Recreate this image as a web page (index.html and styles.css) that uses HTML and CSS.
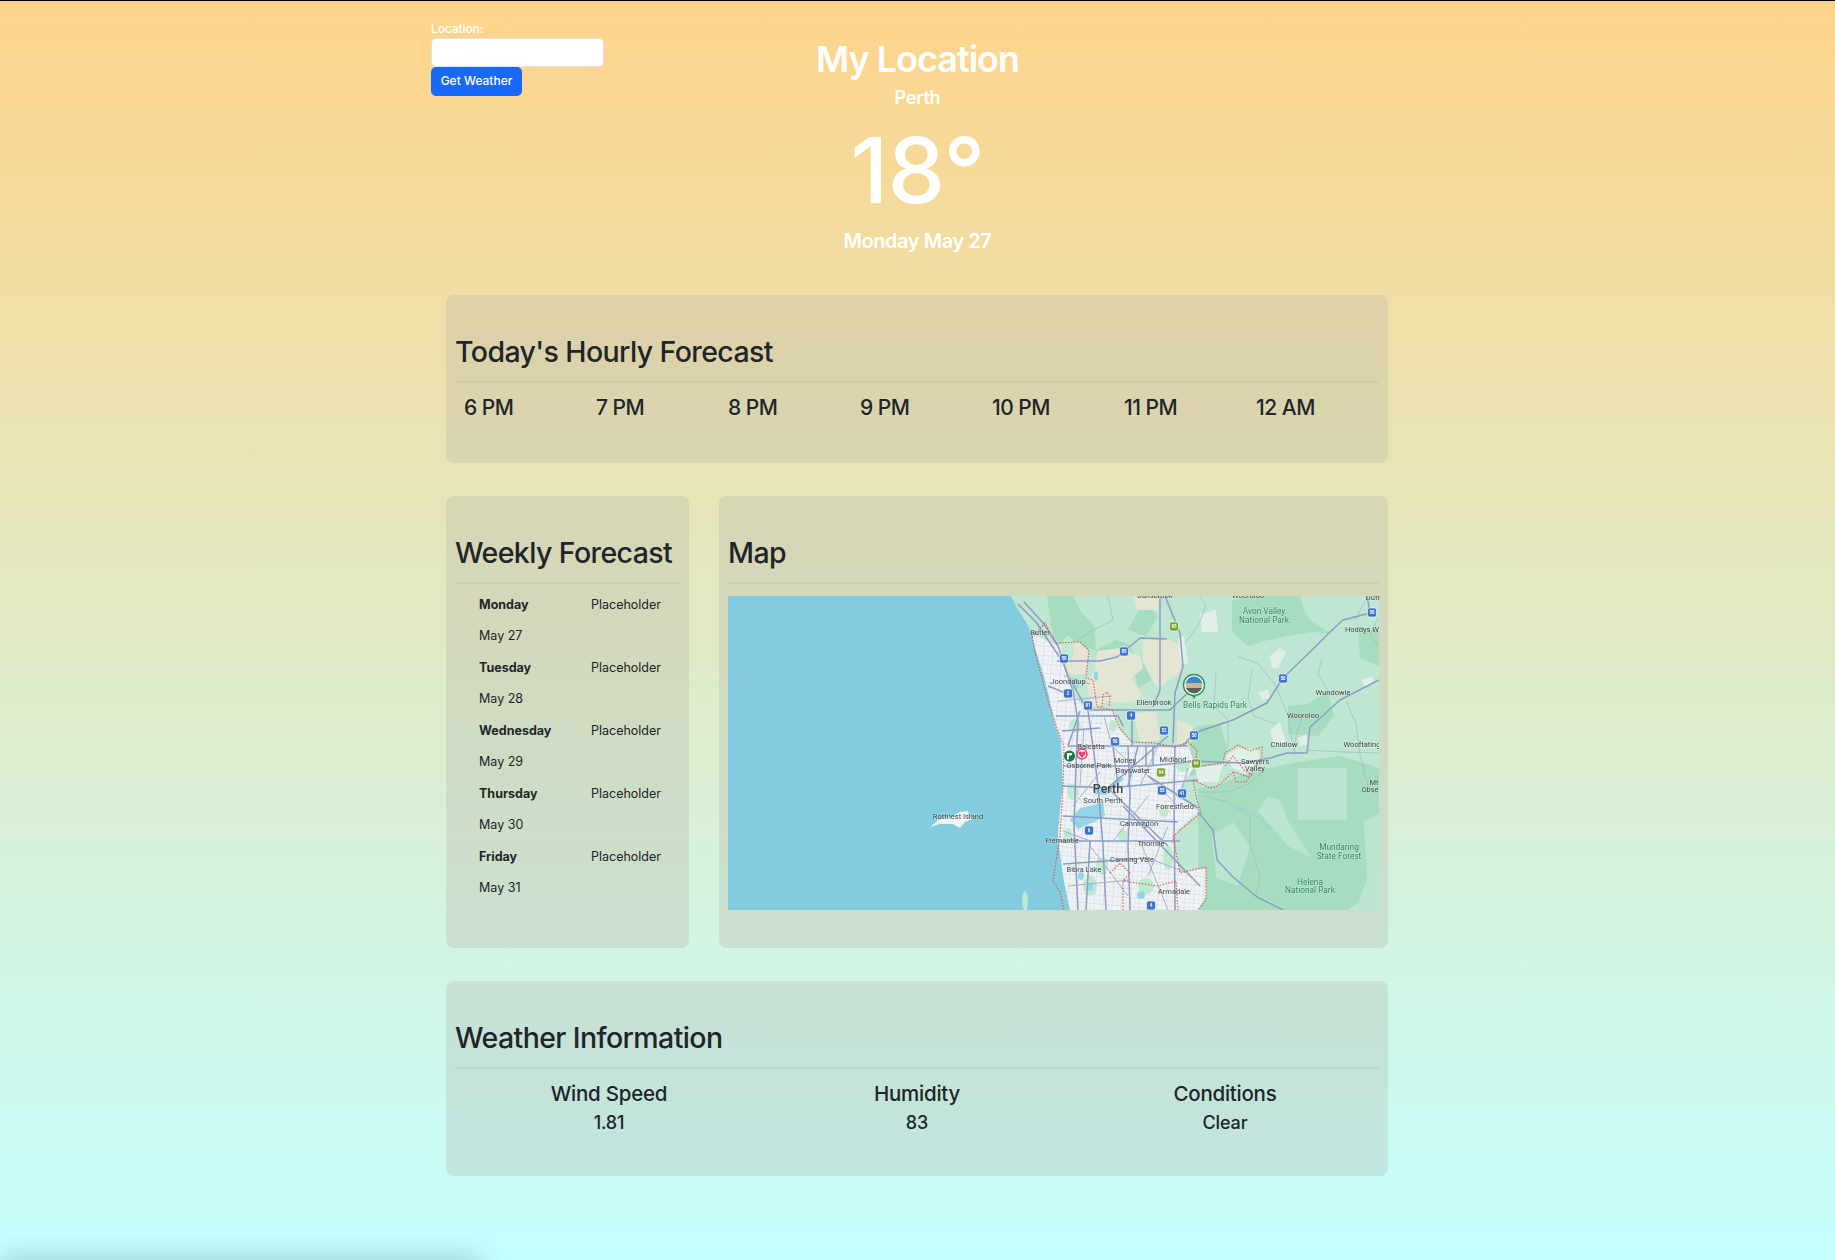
FILE: index.html
```html
<!DOCTYPE html>
<html lang="en">
<head>
<meta charset="utf-8">
<title>Weather</title>
<link rel="stylesheet" href="styles.css">
</head>
<body>
<main class="page">
  <header class="top">
    <form class="search">
      <label class="search-label" for="loc">Location:</label>
      <input class="search-input" id="loc" type="text">
      <button class="search-btn" type="button">Get Weather</button>
    </form>
    <div class="now">
      <h1 class="now-title">My Location</h1>
      <p class="now-city">Perth</p>
      <p class="now-temp">18°</p>
      <p class="now-date">Monday May 27</p>
    </div>
  </header>

  <section class="card card-hourly">
    <h2 class="card-title">Today's Hourly Forecast</h2>
    <div class="hours">
      <span class="hour">6 PM</span>
      <span class="hour">7 PM</span>
      <span class="hour">8 PM</span>
      <span class="hour">9 PM</span>
      <span class="hour">10 PM</span>
      <span class="hour">11 PM</span>
      <span class="hour">12 AM</span>
    </div>
  </section>

  <div class="split">
    <section class="card card-weekly">
      <h2 class="card-title">Weekly Forecast</h2>
      <div class="days">
        <b class="day">Monday</b><span class="cond">Placeholder</span><span class="date">May 27</span>
        <b class="day">Tuesday</b><span class="cond">Placeholder</span><span class="date">May 28</span>
        <b class="day">Wednesday</b><span class="cond">Placeholder</span><span class="date">May 29</span>
        <b class="day">Thursday</b><span class="cond">Placeholder</span><span class="date">May 30</span>
        <b class="day">Friday</b><span class="cond">Placeholder</span><span class="date">May 31</span>
      </div>
    </section>
    <section class="card card-map">
      <h2 class="card-title">Map</h2>
      <svg class="map" viewBox="0 0 651 314" role="img" aria-label="Map of Perth">
        <defs>
          <pattern id="streets" width="9" height="9" patternUnits="userSpaceOnUse" patternTransform="rotate(5)">
            <path class="street" d="M0 0H9M0 4.500H9M0 0V9M4.500 0V9"/>
          </pattern>
          <clipPath id="photo"><circle cx="466" cy="89" r="8.500"/></clipPath>
        </defs>
        <rect class="land" width="651" height="314"/>
        <g class="forest">
          <path d="M319 0L345 0L352 14L366 30L368 54L352 50L340 56L325 40Z"/>
          <path d="M504 4L525 0L572 0L576 14L582 24L604 38L585 36L560 40L540 44L520 50L504 36Z"/>
          <path d="M368 54L388 44L400 48L414 70L404 82L396 96L372 92Z"/>
          <path d="M452 144L470 130L492 128L500 155L488 178L452 180Z"/>
          <path d="M470 192L490 190L510 180L540 172L570 166L612 160L651 172L651 218L636 226L640 300L620 314L470 314Z"/>
          <path d="M560 110L580 108L600 96L606 120L590 140L560 138Z"/>
          <path d="M415 6L430 20L418 40L400 34Z"/>
          <path d="M630 30L651 36L651 70L632 62Z"/>
          <path d="M405 72L418 66L424 84L410 92Z"/>
        </g>
        <g class="forest-light">
          <path d="M570 172H619V224H570Z"/>
          <path d="M540 200L552 204L560 225L584 262L560 250L530 215Z"/>
          <path d="M484 240L505 226L522 250L510 290L488 282Z"/>
          <path d="M636 226L651 218L651 314L628 314L640 280Z"/>
        </g>
        <g class="tan">
          <path d="M369 55L392 52L412 60L415 72L404 82L415 100L405 106L380 106L362 112L358 84L366 78Z"/>
          <path d="M415 44L438 42L455 50L452 76L430 92L424 84L415 66Z"/>
          <path d="M405 117L428 116L432 144L412 146Z"/>
          <path d="M449 124L465 130L462 148L449 148Z"/>
          <path d="M405 1L432 1L430 14L410 14Z"/>
          <path d="M330 48L352 46L360 56L358 78L340 78L332 62Z"/>
          <path d="M420 195L440 192L446 240L425 240Z"/>
          <path d="M410 258L445 250L440 285L412 285Z"/>
        </g>
        <g class="blots">
          <path d="M542 60L552 52L558 56L550 72L544 72Z"/>
          <path d="M530 96L540 94L542 102L534 104Z"/>
          <path d="M542 134L552 126L558 146L546 150Z"/>
          <path d="M634 84L644 80L646 88L636 90Z"/>
          <path d="M472 18L488 14L490 36L474 36Z"/>
          <path d="M450 42L456 40L460 68L452 68Z"/>
          <path d="M570 142L578 138L580 148L572 150Z"/>
          <path d="M497 160L510 152L530 154L532 162L518 178L505 172Z"/>
          <path d="M467 172L495 168L490 186L470 186Z"/>
        </g>
        <path class="sea" d="M0 0L283 0L290 14L298 26L304 38L308 55L316 80L322 105L327 128L333 145L334 165L335 190L332 215L330 240L333 265L336 285L342 314L0 314Z"/>
        <path class="urban" d="M304 38L330 50L340 80L346 100L360 116L384 114L392 135L404 148L447 152L460 148L467 170L456 186L446 200L462 208L470 216L450 234L445 245L452 276L478 272L478 300L470 314L342 314L336 285L333 265L330 240L332 215L335 190L334 165L333 145L327 128L322 105L316 80L308 55Z"/>
        <path class="urban-streets" d="M304 38L330 50L340 80L346 100L360 116L384 114L392 135L404 148L447 152L460 148L467 170L456 186L446 200L462 208L470 216L450 234L445 245L452 276L478 272L478 300L470 314L342 314L336 285L333 265L330 240L332 215L335 190L334 165L333 145L327 128L322 105L316 80L308 55Z"/>
        <g class="parks">
          <ellipse cx="340" cy="52" rx="6" ry="12"/>
          <ellipse cx="352" cy="96" rx="5" ry="8"/>
          <ellipse cx="347" cy="130" rx="6" ry="7"/>
          <ellipse cx="345" cy="196" rx="6" ry="8"/>
          <ellipse cx="374" cy="270" rx="6" ry="9"/>
          <ellipse cx="362" cy="290" rx="7" ry="10"/>
          <ellipse cx="440" cy="262" rx="5" ry="12"/>
          <ellipse cx="395" cy="240" rx="5" ry="6"/>
          <ellipse cx="465" cy="190" rx="6" ry="9"/>
          <ellipse cx="418" cy="290" rx="8" ry="8"/>
          <ellipse cx="455" cy="170" rx="7" ry="6"/>
          <ellipse cx="340" cy="240" rx="4" ry="8"/>
          <ellipse cx="385" cy="130" rx="4" ry="6"/>
          <ellipse cx="436" cy="215" rx="5" ry="6"/>
        </g>
        <g class="water">
          <path d="M342 224L352 212L366 209L375 205L377 220L366 226L350 233Z"/>
          <path d="M365 192L376 194L392 180L396 183L378 199L366 198Z"/>
          <ellipse cx="353" cy="280" rx="3" ry="4"/>
          <ellipse cx="362" cy="291" rx="3" ry="4"/>
          <ellipse cx="413" cy="299" rx="4" ry="4"/>
          <ellipse cx="348" cy="88" rx="3" ry="6"/>
          <ellipse cx="368" cy="80" rx="2" ry="5"/>
        </g>
        <path class="river" d="M510 210L528 220L544 234"/>
        <path class="island" d="M202 231L210 224L222 221L232 216L240 215L241 221L247 222L237 226L232 232L225 228L212 228Z"/>
        <ellipse class="land" cx="297" cy="305" rx="3" ry="10"/>
        <g class="thin">
          <path d="M380 0L385 24L362 36L350 44"/>
          <path d="M472 0L478 10L470 30L456 48"/>
          <path d="M488 75L486 110L500 124L500 150"/>
          <path d="M510 60L530 68L548 90L560 120L566 155"/>
          <path d="M524 74L520 102L526 120L548 128"/>
          <path d="M575 118L568 140L566 160"/>
          <path d="M618 104L628 128L632 158L640 190L651 200"/>
          <path d="M579 154L615 156L651 157"/>
          <path d="M475 200L500 206L522 220L522 248L532 280L528 300"/>
          <path d="M603 100L590 78L594 62"/>
          <path d="M472 196L500 196L520 188L534 176"/>
          <path d="M640 0L632 14L628 24"/>
          <path d="M650 22L642 40L651 50"/>
        </g>
        <g class="road">
          <path d="M432 0L432 41L432 94L425 111"/>
          <path d="M437 0L452 37L455 71L447 97L445 147"/>
          <path d="M329 65L372 65L389 61L412 42L439 43"/>
          <path d="M362 114L442 114L449 107L462 95L468 86"/>
          <path d="M404 117L404 151"/>
          <path d="M455 150L466 137L505 124L539 107L555 82L582 56L602 36L615 24L642 17L639 0"/>
          <path d="M460 165L516 167L542 162L559 157L579 157L582 131L590 124L612 104L651 84"/>
          <path d="M470 216L485 234L489 264L505 281L529 301L555 314"/>
          <path d="M290 8L308 26L320 44L335 66L345 95L350 125L348 170L346 230L350 314"/>
          <path d="M296 6L316 28L330 50L340 80L360 115L365 150L370 190L375 250L378 314"/>
          <path d="M400 150L402 200L400 250L402 314"/>
          <path d="M447 150L446 200L447 314"/>
          <path d="M328 120L390 120L395 130"/>
          <path d="M340 150L460 150"/>
          <path d="M335 170L420 170L470 165"/>
          <path d="M335 190L380 192L470 184"/>
          <path d="M335 220L450 226"/>
          <path d="M330 245L452 245"/>
          <path d="M335 268L420 262"/>
          <path d="M380 192L440 140"/>
          <path d="M380 192L440 250"/>
          <path d="M395 210L472 290"/>
          <path d="M320 90L345 100M334 135L372 132M418 150V170M425 150V170M385 150L390 190M352 115L340 150"/>
          <path d="M362 245L358 314M420 180L470 212M410 150L400 190"/>
        </g>
        <g class="road-mid">
          <path d="M336 80L362 88M330 105L384 100M356 132L352 190M376 120L384 150"/>
          <path d="M345 210L372 176M410 170L450 210M420 200L385 245M440 230L420 280"/>
          <path d="M340 290L402 284M362 250L400 300M412 245L440 314M460 172L452 200"/>
          <path d="M384 150L405 170M430 150L412 190M335 235L362 245M420 262L462 278"/>
        </g>
        <path class="border" d="M304 41L317 27L328 47L352 46L361 54L358 82L365 84L369 111L384 114L391 131L404 146L426 147L447 151L460 146L469 154L467 171L495 167L497 157L510 149L522 155L534 151L534 161L521 181L505 176L490 190L482 192L465 184L469 204L473 217L452 234L445 241L452 277L478 271L478 304L470 314"/>
        <path class="border" d="M374 111L375 99L379 96L382 102L381 111"/>
        <path class="border" d="M304 41L308 60L320 105L330 135L336 150L335 190L332 240L325 285L332 296L336 314"/>
        <path class="border" d="M497 170L505 160L516 174L525 180M505 176L508 186L518 186L521 181"/>
        <path class="border" d="M395 314L395 285L430 290L448 285L450 314M382 277L392 267L402 277L395 285"/>
        <g class="shield">
          <rect x="331.500" y="58" width="9" height="9" rx="2"/><text x="336" y="64.300">50</text>
          <rect x="391.500" y="51" width="9" height="9" rx="2"/><text x="396" y="57.300">85</text>
          <rect x="335.500" y="93" width="9" height="9" rx="2"/><text x="340" y="99.300">2</text>
          <rect x="355.500" y="105" width="9" height="9" rx="2"/><text x="360" y="111.300">81</text>
          <rect x="398.500" y="115" width="9" height="9" rx="2"/><text x="403" y="121.300">4</text>
          <rect x="431.500" y="130" width="9" height="9" rx="2"/><text x="436" y="136.300">52</text>
          <rect x="461.500" y="135" width="9" height="9" rx="2"/><text x="466" y="141.300">50</text>
          <rect x="382.500" y="141" width="9" height="9" rx="2"/><text x="387" y="147.300">50</text>
          <rect x="550.500" y="78" width="9" height="9" rx="2"/><text x="555" y="84.300">50</text>
          <rect x="639.500" y="12" width="9" height="9" rx="2"/><text x="644" y="18.300">50</text>
          <rect x="429.500" y="190" width="9" height="9" rx="2"/><text x="434" y="196.300">55</text>
          <rect x="449.500" y="193" width="9" height="9" rx="2"/><text x="454" y="199.300">41</text>
          <rect x="356.500" y="230" width="9" height="9" rx="2"/><text x="361" y="236.300">6</text>
          <rect x="418.500" y="305" width="9" height="9" rx="2"/><text x="423" y="311.300">4</text>
        </g>
        <g class="shield shield-green">
          <rect x="441.500" y="26" width="9" height="9" rx="2"/><text x="446" y="32.300">95</text>
          <rect x="428.500" y="172" width="9" height="9" rx="2"/><text x="433" y="178.300">94</text>
          <rect x="463.500" y="163" width="9" height="9" rx="2"/><text x="468" y="169.300">94</text>
        </g>
        <g class="labels">
          <text x="230" y="223">Rottnest Island</text>
          <text x="312" y="39">Butler</text>
          <text x="340" y="88">Joondalup</text>
          <text x="426" y="109">Ellenbrook</text>
          <text x="634" y="36">Hoddys W</text>
          <text x="605" y="99">Wundowie</text>
          <text x="575" y="122">Wooroloo</text>
          <text x="556" y="151">Chidlow</text>
          <text x="634" y="151">Wooftating</text>
          <text x="527" y="168">Sawyers</text>
          <text x="527" y="175">Valley</text>
          <text x="445" y="166">Midland</text>
          <text x="397" y="167">Morley</text>
          <text x="405" y="177">Bayswater</text>
          <text x="363" y="153">Balcatta</text>
          <text x="361" y="172">Osborne Park</text>
          <text x="375" y="207">South Perth</text>
          <text x="447" y="213">Forrestfield</text>
          <text x="411" y="230">Cannington</text>
          <text x="334" y="247">Fremantle</text>
          <text x="423" y="250">Thornlie</text>
          <text x="404" y="266">Canning Vale</text>
          <text x="356" y="276">Bibra Lake</text>
          <text x="446" y="298">Armadale</text>
          <text x="646" y="189">Mt</text>
          <text x="642" y="196">Obse</text>
          <text x="427" y="2">Bullsbrook</text>
          <text x="520" y="2">Wooroloo</text>
          <text x="645" y="4">Duff</text>
          <text class="label-city" x="380" y="197">Perth</text>
        </g>
        <g class="labels labels-green">
          <text x="487" y="112">Bells Rapids Park</text>
          <text x="536" y="18">Avon Valley</text>
          <text x="536" y="27">National Park</text>
          <text x="611" y="254">Mundaring</text>
          <text x="611" y="263">State Forest</text>
          <text x="582" y="289">Helena</text>
          <text x="582" y="297">National Park</text>
        </g>
        <g class="pin-photo">
          <path class="pin-tip" d="M463 98H469L466 103Z"/>
          <circle class="pin-ring" cx="466" cy="89" r="10.500"/>
          <g clip-path="url(#photo)">
            <rect class="photo-sky" x="456" y="80" width="20" height="8"/>
            <rect class="photo-hill" x="456" y="87" width="20" height="6"/>
            <rect class="photo-rock" x="456" y="92" width="20" height="7"/>
          </g>
        </g>
        <circle class="pin-green" cx="341.500" cy="160" r="5.500"/>
        <path class="pin-flag" d="M339 157H344.500L343.500 159.500L341 159.500V163.500H339Z"/>
        <circle class="pin-pink" cx="354" cy="158" r="5"/>
        <path class="pin-heart" d="M354 162L350.500 158C349.500 155.500 353 154.500 354 156.500C355 154.500 358.500 155.500 357.500 158Z"/>
      </svg>
    </section>
  </div>

  <section class="card card-info">
    <h2 class="card-title">Weather Information</h2>
    <div class="stats">
      <div class="stat"><p class="stat-name">Wind Speed</p><p class="stat-value">1.81</p></div>
      <div class="stat"><p class="stat-name">Humidity</p><p class="stat-value">83</p></div>
      <div class="stat"><p class="stat-name">Conditions</p><p class="stat-value">Clear</p></div>
    </div>
  </section>
</main>
<div class="edge-shadow"></div>
</body>
</html>
```

FILE: styles.css
```css
* { box-sizing: border-box; }
html, body { margin: 0; height: 1260px; overflow: hidden; }
body {
  background: linear-gradient(#fed48a, #c4ffff);
  border-top: 1px solid #000;
  font-family: Inter, "Liberation Sans", sans-serif;
  color: #212529;
}
p, h1, h2 { margin: 0; }

.page { width: 973px; margin: 0 auto; padding: 0 16px 0 15px; }

.top { display: grid; height: 294px; margin: 0 -16px 0 -15px; }
.search, .now { grid-area: 1 / 1; }

.search { display: flex; flex-direction: column; align-items: flex-start; padding-top: 20px; color: #fff; font-size: 12px; font-weight: 500; }
.search-label { line-height: 15px; height: 17px; letter-spacing: -.1px; }
.search-input { width: 173px; height: 29px; background: #fff; border: 1px solid #dee2e6; border-radius: 5px; padding: 0; }
.search-btn { width: 91px; height: 29px; background: #1a68fb; color: #fff; border: 0; border-radius: 5px; font: 500 12px Inter, sans-serif; padding: 0 0 2px; }

.now { text-align: center; color: #fff; padding-top: 34px; }
.now-title { font-size: 36px; font-weight: 600; line-height: 48px; letter-spacing: -1px; }
.now-city { font-size: 18px; font-weight: 600; line-height: 24px; margin-top: 3px; letter-spacing: -.25px; }
.now-temp { font-size: 91px; font-weight: 500; line-height: 100px; margin-top: 10px; letter-spacing: -.5px; }
.now-date { font-size: 20px; font-weight: 600; line-height: 26px; margin-top: 8px; letter-spacing: -.45px; }

.card { background: rgba(180, 180, 170, .3); border-radius: 8px; padding: 0 9px; margin-bottom: 33px; }
.card-title { font-size: 28.500px; font-weight: 500; line-height: 40px; padding-top: 37px; height: 88px; border-bottom: 2px solid rgba(130, 130, 120, .1); letter-spacing: -.6px; white-space: nowrap; }

.card-hourly { height: 168px; }
.hours { display: grid; grid-template-columns: repeat(7, 132px); padding-top: 11px; }
.hour { font-size: 21px; font-weight: 500; line-height: 28px; padding-left: 9px; letter-spacing: -.5px; }

.split { display: grid; grid-template-columns: 243px 669px; gap: 30px; }
.card-weekly, .card-map { height: 452px; }

.days { display: grid; grid-template-columns: 112px auto; padding: 5px 0 0 24px; font-size: 12.500px; }
.day, .cond { line-height: 31px; }
.date { grid-column: 1 / -1; line-height: 32px; }
.day { font-weight: 700; }

.map { display: block; width: 651px; height: 314px; margin-top: 12px; filter: blur(.5px); }
.land { fill: #bfe6d3; }
.sea { fill: #83cbde; }
.forest path { fill: #a6dcc0; }
.forest-light path { fill: #bbe5d1; }
.tan path { fill: #e4e5d3; }
.blots path { fill: #e2efe9; }
.urban { fill: #f1f3f5; }
.urban-streets { fill: url(#streets); }
.street { fill: none; stroke: #d0d8e5; stroke-width: .6; }
.parks ellipse { fill: #bde9cf; }
.water ellipse, .water path { fill: #93d6e8; }
.river { fill: none; stroke: #93d3e6; stroke-width: 1.200; }
.island { fill: #eef5f2; }
.thin path { fill: none; stroke: #9fc0c4; stroke-width: .8; }
.road path { fill: none; stroke: #8c9dc4; stroke-width: 1.500; stroke-linejoin: round; }
.road-mid path { fill: none; stroke: #a3b1cd; stroke-width: 1; }
.border { fill: none; stroke: #e2584d; stroke-width: 1.100; stroke-dasharray: 1.500 1.500; }
.shield rect { fill: #3d74c9; stroke: #fff; stroke-width: .6; }
.shield text { fill: #fff; font: 700 4.500px Roboto, sans-serif; text-anchor: middle; }
.shield-green rect { fill: #7ba32f; }
.labels text { font: 400 7.500px Roboto, sans-serif; fill: #3f4347; text-anchor: middle; stroke: rgba(255, 255, 255, .35); stroke-width: 1px; paint-order: stroke; }
.labels .label-city { font-size: 12.500px; font-weight: 500; fill: #3c4043; }
.labels-green text { font-size: 8.300px; fill: #2a8a58; }
.pin-ring { fill: #fff; stroke: #2a9a55; stroke-width: 1.500; }
.pin-tip { fill: #2a9a55; }
.photo-sky { fill: #3f86cf; }
.photo-hill { fill: #c9b78f; }
.photo-rock { fill: #5a5f58; }
.pin-green { fill: #0e7a3d; }
.pin-flag { fill: #fff; }
.pin-pink { fill: #fff; stroke: #f23e6c; stroke-width: 1.500; }
.pin-heart { fill: #f23e6c; }

.card-info { height: 195px; }
.stats { display: grid; grid-template-columns: repeat(3, 1fr); text-align: center; padding-top: 10px; }
.stat-name { font-size: 20.500px; font-weight: 500; line-height: 30px; letter-spacing: -.25px; }
.stat-value { font-size: 18px; font-weight: 500; line-height: 28px; letter-spacing: -.15px; }

.edge-shadow { position: fixed; left: 0; top: 1260px; width: 480px; height: 40px; box-shadow: 0 0 30px rgba(0, 0, 0, .22); }
```
